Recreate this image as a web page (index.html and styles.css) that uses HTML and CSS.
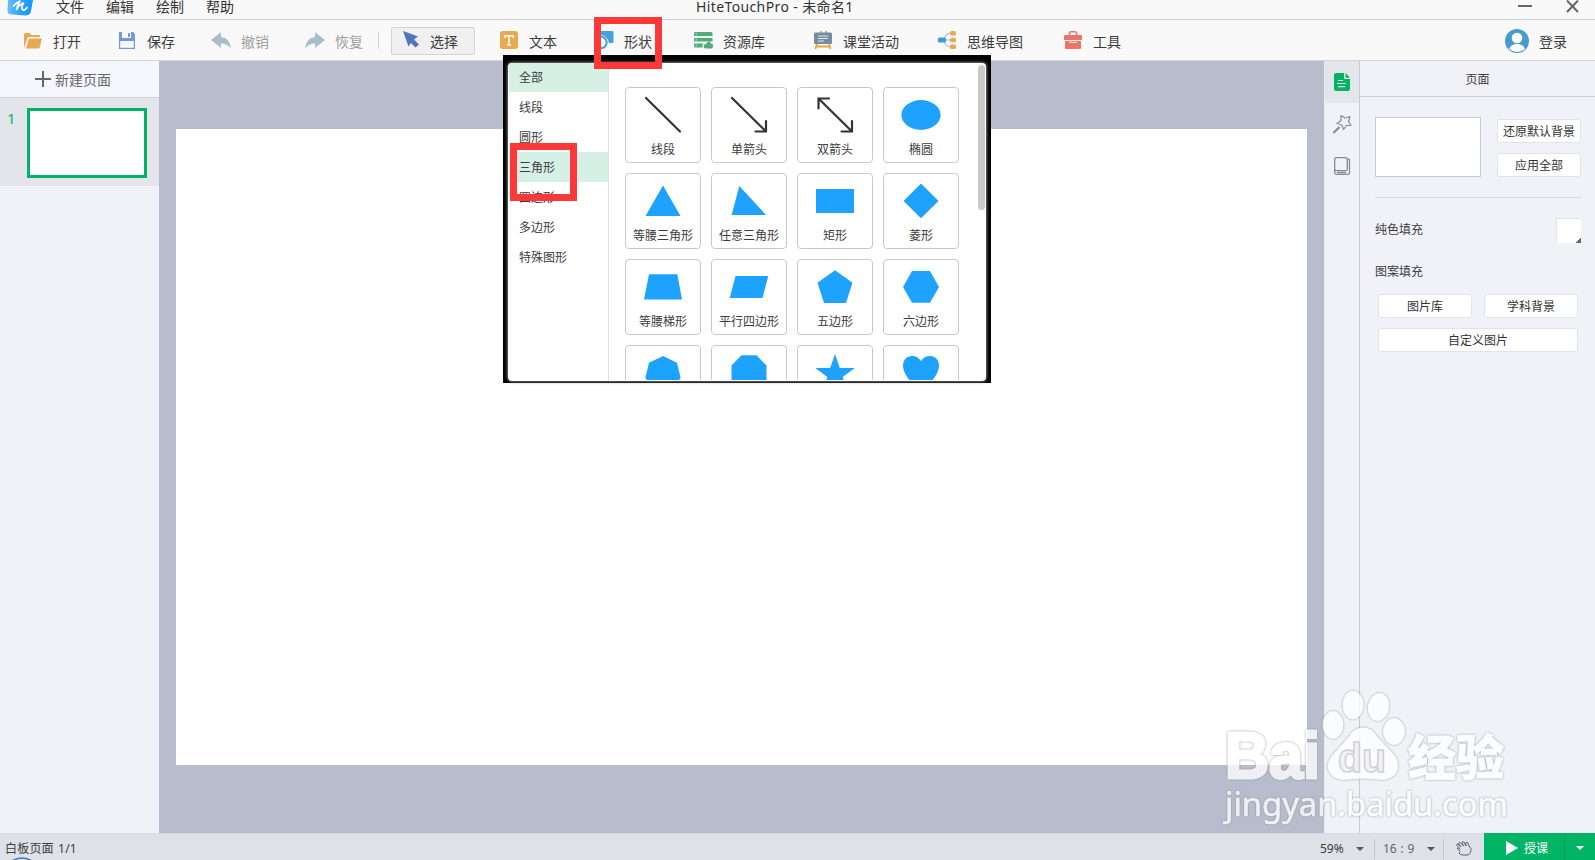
FILE: index.html
```html
<!DOCTYPE html>
<html lang="zh-CN">
<head>
    <meta charset="UTF-8">
    <title>HiteTouchPro - 未命名1</title>
    <link rel="stylesheet" href="styles.css">
</head>
<body>
    <div class="app">
        <!-- Title bar -->
        <header class="titlebar">
            <svg class="logo" width="28" height="16" viewBox="0 0 28 16">
                <defs>
                    <linearGradient id="logoFill" x1="0" y1="0" x2="1" y2="0">
                        <stop offset="0" stop-color="#6cc0f8"/>
                        <stop offset="0.5" stop-color="#2fa4fb"/>
                        <stop offset="1" stop-color="#1593ff"/>
                    </linearGradient>
                </defs>
                <path d="M1 0H26L24 11Q23.500 15 19 15.500L5 14.500Q0 14.500 .5 10Z" fill="url(#logoFill)"/>
                <path d="M6.500 6Q10 2 13 1Q10 6 9.500 9.500Q13 4 16.500 3Q14 7 15.500 9.500Q17 11.500 20 7.500" fill="none" stroke="#fff" stroke-width="1.700" stroke-linecap="round" stroke-linejoin="round"/>
            </svg>
            <nav class="menu">
                <span>文件</span>
                <span>编辑</span>
                <span>绘制</span>
                <span>帮助</span>
            </nav>
            <div class="window-title">HiteTouchPro - 未命名1</div>
            <div class="window-buttons">
                <svg width="14" height="14" viewBox="0 0 14 14"><path d="M0 6H14" stroke="#666" stroke-width="2"/></svg>
                <svg width="14" height="14" viewBox="0 0 14 14"><path d="M1 .5L12 12M12 .5L1 12" stroke="#666" stroke-width="2"/></svg>
            </div>
        </header>

        <!-- Toolbar -->
        <div class="toolbar">
            <div class="tool">
                <svg class="tool-icon" viewBox="0 0 20 20">
                    <path d="M0 16V2.500Q0 1 1.500 1H5.500L7.500 3H15Q16 3 16 4V5H5Q3.800 5 3.400 6Z" fill="#e8a951"/>
                    <path d="M5 6.500H18L15.800 15Q15.500 16.500 14 16.500H2Z" fill="#e8a951"/>
                </svg>
                <span>打开</span>
            </div>
            <div class="tool">
                <svg class="tool-icon" viewBox="0 0 20 20">
                    <path d="M1 0H15L17 2V17H1Z" fill="#6f99e3"/>
                    <path d="M4 0H13V6H4Z" fill="#f9f9f9"/>
                    <path d="M10 1H12V5H10Z" fill="#6f99e3"/>
                    <path d="M2.200 9H15.800V15.800H2.200Z" fill="#f9f9f9"/>
                </svg>
                <span>保存</span>
            </div>
            <div class="tool disabled">
                <svg class="tool-icon" viewBox="0 0 20 20"><path d="M-1 8L9 0V5Q18 6 19 16.500Q15 11.500 9 11.500V16Z" fill="#a7bdcc"/></svg>
                <span>撤销</span>
            </div>
            <div class="tool tool-redo disabled">
                <svg class="tool-icon" viewBox="0 0 20 20"><path d="M19 8L9 0V5Q0 6 -1 16.500Q3 11.500 9 11.500V16Z" fill="#a7bdcc"/></svg>
                <span>恢复</span>
            </div>
            <div class="separator"></div>
            <div class="tool tool-select">
                <svg class="tool-icon" viewBox="0 0 20 20"><path d="M2 -1L17 4.500L13 7.500L18 12.500L14.500 15.500L10 11L7.500 14.500Z" fill="#4c75bd"/></svg>
                <span>选择</span>
            </div>
            <div class="tool tool-text">
                <svg class="tool-icon" viewBox="0 0 20 20">
                    <rect x="0" y="-1" width="18" height="18" rx="3" fill="#e8a951"/>
                    <path d="M4.800 6V3.700H13.200V6M9 4V13M7 13H11" fill="none" stroke="#fff" stroke-width="1.500"/>
                </svg>
                <span>文本</span>
            </div>
            <div class="tool tool-shape">
                <svg class="tool-icon" viewBox="0 0 20 20">
                    <path d="M6 -1H17Q18.500 -1 18.500 .5V10Q18.500 11 17 11H14Q12 3 5 3V0Q5 -1 6 -1Z" fill="#45a0dc"/>
                    <circle cx="6" cy="10.500" r="5.700" fill="none" stroke="#45a0dc" stroke-width="2"/>
                </svg>
                <span>形状</span>
            </div>
            <div class="tool tool-library">
                <svg class="tool-icon" viewBox="0 0 20 20">
                    <path d="M1 0H17Q18.500 0 18.500 1.500V4H0V1.500Q0 0 1 0ZM0 6H18.500V9.500H0ZM0 11.500H9.500Q7.500 13.500 9 15.500H1Q0 15.500 0 14Z" fill="#50ac79"/>
                    <path d="M12 16.500Q9.500 16.300 9.700 14T12 12Q15 7.500 17 11.500Q19.500 12 19 14.500T17 16.500Z" fill="#50ac79"/>
                    <path d="M1.500 2H3M1.500 7.800H3M1.500 13.500H3" stroke="#d9efe2"/>
                </svg>
                <span>资源库</span>
            </div>
            <div class="tool tool-activity">
                <svg class="tool-icon" viewBox="0 0 20 20">
                    <path d="M7 -1V2M12 -1V2M3 12L1.500 17M15 12L16.500 17M2 14.500H16" stroke="#eaa63d" stroke-width="1.800"/>
                    <rect x="0" y="0.500" width="18" height="11.500" rx="1.500" fill="#718ea2"/>
                    <path d="M4 4H14M4 6.500H14M4 9H10" stroke="#dde5ea" stroke-width="1"/>
                </svg>
                <span>课堂活动</span>
            </div>
            <div class="tool tool-mindmap">
                <svg class="tool-icon" viewBox="0 0 20 20">
                    <path d="M12 1Q7 2 6 8Q7 14 12 15M6 8H12" fill="none" stroke="#9bbdd5" stroke-width="1.200"/>
                    <rect x="0" y="5.500" width="8" height="5" rx="1.500" fill="#3e9bdb"/>
                    <rect x="12" y="-1" width="6" height="4.500" rx="1.500" fill="#e8a951"/>
                    <rect x="12" y="5.800" width="6" height="4.500" rx="1.500" fill="#e8a951"/>
                    <rect x="12" y="12.500" width="6" height="4.500" rx="1.500" fill="#e8a951"/>
                </svg>
                <span>思维导图</span>
            </div>
            <div class="tool">
                <svg class="tool-icon" viewBox="0 0 20 20">
                    <path d="M5.500 3V.8Q5.500 -.3 7 -.3H11Q12.500 -.3 12.500 .8V3" fill="none" stroke="#ea7765" stroke-width="1.500"/>
                    <path d="M1 3H17Q18 3 18 4V8H0V4Q0 3 1 3ZM1 9H17V16Q17 17 16 17H2Q1 17 1 16Z" fill="#ea7765"/>
                    <path d="M6 8V10.500H12V8" fill="none" stroke="#fbd6cf" stroke-width="1.200"/>
                </svg>
                <span>工具</span>
            </div>
            <div class="login">
                <svg width="24" height="24" viewBox="0 0 24 24">
                    <circle cx="12" cy="12" r="12" fill="#479bcd"/>
                    <circle cx="12" cy="9" r="5.300" fill="#fff"/>
                    <path d="M4 20Q6 15 12 15T20 20Q16 23 12 23T4 20Z" fill="#fff"/>
                </svg>
                <span>登录</span>
            </div>
        </div>

        <div class="main">
            <!-- Page list -->
            <aside class="pages">
                <div class="new-page">
                    <svg width="16" height="16" viewBox="0 0 16 16"><path d="M0 8H16M8 0V16" stroke="#666" stroke-width="2"/></svg>
                    <span>新建页面</span>
                </div>
                <div class="page-item">
                    <span class="page-number">1</span>
                    <div class="page-thumb"></div>
                </div>
            </aside>

            <main class="workspace">
                <div class="board"></div>
            </main>

            <!-- Side tabs -->
            <div class="side-tabs">
                <div class="side-tab active">
                    <svg width="17" height="18" viewBox="0 0 17 18">
                        <path d="M2 0H10V5Q10 6 11 6H16V16Q16 18 14 18H2Q0 18 0 16V2Q0 0 2 0Z" fill="#00b466"/>
                        <path d="M11.500 0L16 4.800H12.500Q11.500 4.800 11.500 3.800Z" fill="#00b466"/>
                        <path d="M4 7.500H9M3 10.500H12M4 13.700H11" stroke="#e4f4ec" stroke-width="1.200"/>
                    </svg>
                </div>
                <div class="side-tab">
                    <svg width="19" height="19" viewBox="0 0 19 19">
                        <path d="M8 .5L12 3L17 1.500L15.500 6.500L18 10.500L13.500 10.500L10.500 14.500L9 10L4 8.500L8 5.500Z" fill="none" stroke="#878b99" stroke-width="1.200" stroke-linejoin="round"/>
                        <path d="M6.500 12L.3 18" stroke="#878b99" stroke-width="2.200"/>
                    </svg>
                </div>
                <div class="side-tab">
                    <svg width="17" height="18" viewBox="0 0 17 18">
                        <rect x="0.700" y="0.700" width="12.600" height="13" rx="1.500" fill="none" stroke="#868a99" stroke-width="1.300"/>
                        <path d="M.7 12V15.500Q.7 17.300 2.500 17.300H14Q15.500 17.300 15.500 15.800V3Q15.500 2 14 2M3 15.500H12" fill="none" stroke="#868a99" stroke-width="1.300"/>
                    </svg>
                </div>
            </div>

            <!-- Page properties -->
            <aside class="panel">
                <h2 class="panel-title">页面</h2>
                <div class="panel-body">
                    <div class="background-row">
                        <div class="background-preview"></div>
                        <div class="background-actions">
                            <button class="btn">还原默认背景</button>
                            <button class="btn">应用全部</button>
                        </div>
                    </div>
                    <div class="fill-row">
                        <span>纯色填充</span>
                        <div class="swatch"></div>
                    </div>
                    <div class="pattern-label">图案填充</div>
                    <div class="pattern-grid">
                        <button class="btn">图片库</button>
                        <button class="btn">学科背景</button>
                        <button class="btn wide">自定义图片</button>
                    </div>
                </div>
            </aside>
        </div>

        <!-- Status bar -->
        <footer class="statusbar">
            <span class="page-count">白板页面 1/1</span>
            <div class="status-right">
                <div class="zoom-level"><span>59%</span><i class="caret"></i></div>
                <div class="ratio"><span>16 : 9</span><i class="caret"></i></div>
                <div class="hand">
                    <svg width="16" height="15" viewBox="0 0 16 15">
                        <path d="M4 10L1.500 8Q.5 6.500 2.500 7L4 8L1 4.500Q0 2.500 2 3.200L5 6L2.500 2.300Q3 .5 4.500 1.700L7.500 5L6 1.500Q7 0 8 1L10 5L9.700 2Q11 .6 12 2L13.500 6Q15.500 7 15 9.500Q14.500 13 12 14H7Q4 14 3 12L4.500 10.500" fill="none" stroke="#5f6370" stroke-width="1"/>
                    </svg>
                </div>
                <div class="teach">
                    <svg width="12" height="14" viewBox="0 0 12 14"><path d="M0 0L12 7L0 14Z" fill="#fff"/></svg>
                    <span>授课</span>
                </div>
                <div class="teach-more"><i class="caret light"></i></div>
            </div>
            <svg class="badge" width="20" height="3" viewBox="0 0 20 3"><path d="M0 4Q10 -2 20 4" fill="none" stroke="#2877a8" stroke-width="1.500"/></svg>
        </footer>
    </div>

    <!-- Shape picker -->
    <div class="shape-popup">
        <div class="popup-inner">
            <ul class="categories">
                <li class="on">全部</li>
                <li>线段</li>
                <li>圆形</li>
                <li class="on">三角形</li>
                <li>四边形</li>
                <li>多边形</li>
                <li>特殊图形</li>
            </ul>
            <div class="shapes">
                <div class="shape"><svg viewBox="0 0 40 40"><path class="line" d="M3 3L37 36.500"/></svg><span>线段</span></div>
                <div class="shape"><svg viewBox="0 0 40 40"><path class="line" d="M3 3L37 36.500M26.500 36.500H37V26"/></svg><span>单箭头</span></div>
                <div class="shape"><svg viewBox="0 0 40 40"><path class="line" d="M3.500 3.500L37 36.500M26.500 36.500H37V26M3.500 13.500V3.500H14"/></svg><span>双箭头</span></div>
                <div class="shape"><svg viewBox="0 0 40 40"><ellipse cx="20" cy="20" rx="19.600" ry="15"/></svg><span>椭圆</span></div>
                <div class="shape"><svg viewBox="0 0 40 40"><path d="M20 4.500L37.500 35H2.500Z"/></svg><span>等腰三角形</span></div>
                <div class="shape"><svg viewBox="0 0 40 40"><path d="M10.300 5L37 34H2.600Z"/></svg><span>任意三角形</span></div>
                <div class="shape"><svg viewBox="0 0 40 40"><path d="M1 8H39V32H1Z"/></svg><span>矩形</span></div>
                <div class="shape"><svg viewBox="0 0 40 40"><path d="M20 2.500L37.500 20L20 37.300L2.500 20Z"/></svg><span>菱形</span></div>
                <div class="shape"><svg viewBox="0 0 40 40"><path d="M6 7.300H34.300L39 32.500H1Z"/></svg><span>等腰梯形</span></div>
                <div class="shape"><svg viewBox="0 0 40 40"><path d="M6.500 9H39.300L33.500 31H.7Z"/></svg><span>平行四边形</span></div>
                <div class="shape"><svg viewBox="0 0 40 40"><path d="M20 3.300L37.500 15.700L31 36H9L2.500 15.700Z"/></svg><span>五边形</span></div>
                <div class="shape"><svg viewBox="0 0 40 40"><path d="M2 20L11 4H29L38 20L29 35.700H11Z"/></svg><span>六边形</span></div>
                <div class="shape"><svg viewBox="0 0 40 40"><path d="M20 3L34 9.800L37.700 25L28 37H12L2.300 25L6 9.800Z"/></svg></div>
                <div class="shape"><svg viewBox="0 0 40 40"><path d="M12.500 2.300H27.500L37.500 12.500V27.500L27.500 37.500H12.500L2.500 27.500V12.500Z"/></svg></div>
                <div class="shape"><svg viewBox="0 0 40 40"><path d="M20 1L24.800 15H39.700L27.700 24L32 38L20 29.500L8 38L12.300 24L.3 15H15.200Z"/></svg></div>
                <div class="shape"><svg viewBox="0 0 40 40"><path d="M20 8C23 3 29 1.500 34 4.500C38 7 39 13 37 18C34 26 27 32 20 37C13 32 6 26 3 18C1 13 2 7 6 4.500C11 1.500 17 3 20 8Z"/></svg></div>
            </div>
            <div class="scroll-track"><div class="scroll-thumb"></div></div>
        </div>
    </div>

    <!-- Highlight frames -->
    <div class="mark mark-tool"></div>
    <div class="mark mark-category"></div>

    <svg class="watermark" width="300" height="145" viewBox="1215 685 300 145">
        <g class="wm-shape">
            <text x="1225" y="778" class="wm-bai" textLength="95" lengthAdjust="spacingAndGlyphs">Bai</text>
            <ellipse cx="1333" cy="725" rx="10" ry="13.500"/>
            <ellipse cx="1353" cy="705" rx="10" ry="14"/>
            <ellipse cx="1378.500" cy="707" rx="10" ry="13.500" transform="rotate(10 1378.500 707)"/>
            <ellipse cx="1394" cy="731.500" rx="10.500" ry="13"/>
            <path d="M1363 728Q1372 728 1377 737L1394 755Q1401 766 1395 774Q1388 781 1377 779Q1363 777 1350 779Q1335 781 1330 773Q1325 764 1333 755L1349 737Q1354 728 1363 728Z"/>
            <text x="1408" y="775" class="wm-cn" textLength="96">经验</text>
            <text x="1225" y="816" class="wm-url" textLength="283" lengthAdjust="spacingAndGlyphs">jingyan.baidu.com</text>
        </g>
        <text x="1338" y="772" class="wm-du" textLength="48" lengthAdjust="spacingAndGlyphs">du</text>
    </svg>
</body>
</html>
```

FILE: styles.css
```css
:root {
    --green: #00b466;
    --blue: #1ea2ff;
    --bar: #f9f9f9;
    --panel: #f1f2f8;
    --workspace: #b7bdcc;
    --line: #d3d4d8;
    --text: #3c3c3c;
}

* {
    margin: 0;
    padding: 0;
    box-sizing: border-box;
}

body {
    width: 1595px;
    height: 860px;
    overflow: hidden;
    position: relative;
    font-family: "Noto Sans", "Noto Sans CJK SC", sans-serif;
    font-size: 12px;
    color: var(--text);
}

svg {
    display: block;
    flex-shrink: 0;
    overflow: visible;
}

.app {
    height: 860px;
    display: flex;
    flex-direction: column;
}

/* Title bar */
.titlebar {
    height: 20px;
    display: flex;
    align-items: flex-start;
    padding: 0 15px 0 7px;
    background: var(--bar);
    border-bottom: 1px solid var(--line);
    font-size: 14px;
    line-height: 14px;
}

.menu {
    display: flex;
    gap: 22px;
    margin-left: 21px;
    color: #333;
}

.window-title {
    margin-left: 462px;
    color: #333;
    letter-spacing: 0.38px;
    white-space: nowrap;
}

.window-buttons {
    display: flex;
    gap: 34px;
    margin-left: auto;
}

/* Toolbar */
.toolbar {
    height: 41px;
    display: flex;
    align-items: center;
    padding: 1px 28px 0 24px;
    background: var(--bar);
    border-bottom: 1px solid var(--line);
    font-size: 14px;
    line-height: 20px;
}

.tool {
    width: 94px;
    height: 28px;
    display: flex;
    align-items: center;
    gap: 9px;
    white-space: nowrap;
}

.tool-icon {
    width: 20px;
    height: 20px;
    margin-top: 3px;
}

.tool span,
.login span {
    padding-top: 2px;
}

.tool.disabled {
    color: #a0a0a0;
}

.tool-redo {
    width: 72px;
}

.separator {
    width: 1px;
    height: 17px;
    margin-right: 12px;
    background: #d0d0d0;
}

.tool-select {
    width: 84px;
    margin-right: 25px;
    padding-left: 9px;
    background: #f0f0f0;
    border: 1px solid #d3d3d3;
    border-radius: 2px;
}

.tool-text { width: 95px; }
.tool-shape { width: 99px; }
.tool-library { width: 120px; }
.tool-activity { width: 124px; }
.tool-mindmap { width: 126px; }

.login {
    display: flex;
    align-items: center;
    gap: 10px;
    margin-left: auto;
}

/* Layout */
.main {
    height: 772px;
    display: flex;
}

.pages {
    width: 159px;
    background: var(--panel);
}

.new-page {
    height: 37px;
    display: flex;
    align-items: center;
    gap: 4px;
    padding-left: 35px;
    background: #f5f7fc;
    border-bottom: 1px solid var(--line);
    font-size: 14px;
    color: #666;
}

.page-item {
    height: 88px;
    display: flex;
    gap: 11px;
    padding: 10px 0 0 7px;
    background: #e4e5ea;
}

.page-number {
    width: 9px;
    font-size: 15px;
    line-height: 20px;
    color: var(--green);
}

.page-thumb {
    width: 120px;
    height: 70px;
    background: #fff;
    border: 3px solid var(--green);
}

.workspace {
    flex: 1;
    padding: 68px 17px;
    background: var(--workspace);
}

.board {
    height: 636px;
    background: #fff;
}

.side-tabs {
    width: 36px;
    background: var(--panel);
    border-left: 1px solid #e8eaf0;
    border-right: 1px solid #c9cbd2;
}

.side-tab {
    height: 42px;
    display: flex;
    align-items: center;
    justify-content: center;
}

.side-tab.active {
    background: #e3e6eb;
}

/* Properties panel */
.panel {
    width: 235px;
    background: var(--panel);
}

.panel-title {
    height: 36px;
    font-size: 12px;
    font-weight: normal;
    line-height: 37px;
    text-align: center;
    border-bottom: 1px solid #cfd0d5;
}

.panel-body {
    padding: 20px 14px 0 15px;
}

.background-row {
    height: 81px;
    display: flex;
    justify-content: space-between;
    border-bottom: 1px solid #dadce3;
}

.background-preview {
    width: 106px;
    height: 60px;
    background: #fff;
    border: 1px solid #cbcbcb;
}

.background-actions {
    width: 84px;
    display: flex;
    flex-direction: column;
    gap: 10px;
    padding-top: 2px;
}

.btn {
    height: 24px;
    padding-top: 1px;
    background: #fff;
    border: 1px solid #e1e3e9;
    border-radius: 3px;
    font: inherit;
    line-height: 22px;
    color: #333;
    white-space: nowrap;
}

.fill-row {
    height: 25px;
    display: flex;
    justify-content: space-between;
    margin-top: 20px;
    line-height: 24px;
}

.swatch {
    width: 25px;
    height: 25px;
    background: linear-gradient(135deg, transparent 50%, #666 50%) right bottom / 6px 6px no-repeat border-box #fff;
    border: 1px solid #e0e2e8;
    border-right-color: transparent;
    border-bottom-color: transparent;
}

.pattern-label {
    margin-top: 19px;
    line-height: 20px;
}

.pattern-grid {
    display: grid;
    grid-template-columns: 94px 94px;
    gap: 10px 12px;
    padding: 12px 3px 0;
}

.wide {
    grid-column: span 2;
}

/* Status bar */
.statusbar {
    height: 27px;
    position: relative;
    display: flex;
    align-items: center;
    justify-content: space-between;
    padding-left: 5px;
    background: #dee1e8;
    border-top: 1px solid #d8dade;
}

.page-count {
    padding-top: 2px;
    word-spacing: 1px;
    letter-spacing: 0.2px;
}

.status-right {
    height: 27px;
    display: flex;
    align-items: center;
    margin-top: -1px;
}

.status-right span {
    padding-top: 3px;
}

.zoom-level,
.ratio {
    display: flex;
    align-items: center;
    justify-content: space-between;
    height: 20px;
    margin-top: 4px;
    padding-right: 10px;
    border-right: 1px solid #c3c5ca;
}

.zoom-level span,
.ratio span {
    padding-top: 0;
}

.zoom-level {
    width: 55px;
}

.ratio {
    width: 69px;
    padding-left: 8px;
    padding-right: 8px;
    color: #666;
    word-spacing: 0.7px;
}

.caret {
    border: 4px solid transparent;
    border-top-color: #555;
    border-bottom: none;
}

.caret.light {
    border-top-color: #fff;
}

.hand {
    width: 40px;
    padding: 3px 0 0 12px;
}

.teach {
    width: 80px;
    height: 27px;
    display: flex;
    align-items: center;
    gap: 6px;
    padding: 2px 0 0 22px;
    background: var(--green);
    color: #fff;
}

.teach span {
    padding-top: 1px;
}

.teach-more {
    width: 31px;
    height: 27px;
    display: flex;
    align-items: center;
    justify-content: center;
    padding-top: 3px;
    background: var(--green);
    border-left: 1px solid #089a5b;
}

.badge {
    position: absolute;
    left: 12px;
    bottom: 0;
    overflow: hidden;
}

/* Shape picker */
.shape-popup {
    position: absolute;
    left: 503px;
    top: 55px;
    width: 488px;
    height: 328px;
    padding: 8px 5px 2px;
    background: #000;
}

.popup-inner {
    height: 318px;
    display: flex;
    overflow: hidden;
    background: #fff;
    border-radius: 4px;
    box-shadow: 0 0 3px 1px #777;
}

.categories {
    width: 101px;
    list-style: none;
    padding-left: 1px;
    border-right: 1px solid #e2e2e2;
}

.categories li {
    height: 30px;
    padding-left: 10px;
    line-height: 32px;
}

.categories li:first-child {
    height: 29px;
    line-height: 30px;
}

.categories .on {
    background: #d6f0e5;
}

.shapes {
    flex: 1;
    height: 317px;
    overflow: hidden;
    display: grid;
    grid-template-columns: repeat(4, 76px);
    grid-auto-rows: 76px;
    gap: 10px;
    padding: 24px 0 0 16px;
}

.shape {
    display: flex;
    flex-direction: column;
    align-items: center;
    padding-top: 7px;
    border: 1px solid #c9c9c9;
    border-radius: 4px;
    white-space: nowrap;
}

.shape svg {
    width: 40px;
    height: 40px;
    fill: var(--blue);
}

.shape .line {
    fill: none;
    stroke: #333;
    stroke-width: 2.2;
    stroke-linecap: round;
}

.shape span {
    margin-top: 5px;
    line-height: 20px;
}

.scroll-track {
    width: 8px;
    padding-top: 2px;
}

.scroll-thumb {
    width: 7px;
    height: 145px;
    background: #cacaca;
    border-radius: 4px;
}

/* Highlight frames */
.mark {
    position: absolute;
    border: 7px solid #fc3838;
}

.mark-tool {
    left: 594px;
    top: 17px;
    width: 68px;
    height: 52px;
}

.mark-category {
    left: 510px;
    top: 143px;
    width: 67px;
    height: 58px;
}

/* Watermark */
.watermark {
    position: absolute;
    left: 1215px;
    top: 685px;
}

.wm-shape {
    fill: #fff;
    stroke: #fff;
    stroke-width: 1;
    opacity: 0.78;
    filter: drop-shadow(0 0 1px #85858a);
}

.wm-bai {
    font: bold 65px "Liberation Sans", sans-serif;
    stroke-width: 3;
}

.wm-cn {
    font: 900 48px "Noto Sans CJK SC", sans-serif;
}

.wm-url {
    font: 32px "Noto Sans", sans-serif;
    stroke-width: 0.6;
}

.wm-du {
    font: bold 41px "Liberation Sans", sans-serif;
    fill: #f2f2f5;
    stroke: #cfcfd4;
    stroke-width: 1.5;
}
```
